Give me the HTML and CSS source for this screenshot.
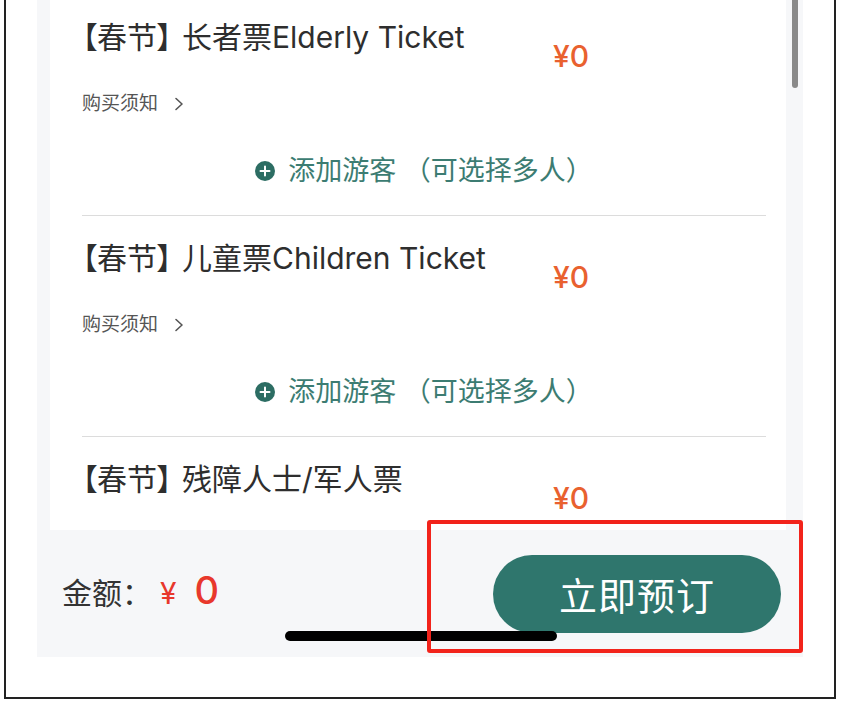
FILE: index.html
```html
<!DOCTYPE html>
<html lang="zh-CN">
<head>
<meta charset="utf-8">
<title>春节门票预订</title>
<link rel="stylesheet" href="styles.css">
</head>
<body>
<div class="frame">
  <div class="phone">
    <div class="card">
      <div class="list">
        <div class="item">
          <div class="head">
            <div class="title"><span class="tag">【春节】</span>长者票Elderly Ticket</div>
            <div class="price">¥0</div>
          </div>
          <div class="note">购买须知<svg class="chev" viewBox="0 0 10 14" width="10" height="14"><path d="M2 1.5 L8 7 L2 12.5" fill="none" stroke="#555" stroke-width="1.6" stroke-linecap="round" stroke-linejoin="round"/></svg></div>
          <div class="add"><svg class="plus" viewBox="0 0 20 20" width="20" height="20"><circle cx="10" cy="10" r="10" fill="#2c6d63"/><path d="M10 5.5 V14.5 M5.5 10 H14.5" stroke="#fff" stroke-width="2" stroke-linecap="round"/></svg><span>添加游客 （可选择多人）</span></div>
        </div>
        <div class="item">
          <div class="head">
            <div class="title"><span class="tag">【春节】</span>儿童票Children Ticket</div>
            <div class="price">¥0</div>
          </div>
          <div class="note">购买须知<svg class="chev" viewBox="0 0 10 14" width="10" height="14"><path d="M2 1.5 L8 7 L2 12.5" fill="none" stroke="#555" stroke-width="1.6" stroke-linecap="round" stroke-linejoin="round"/></svg></div>
          <div class="add"><svg class="plus" viewBox="0 0 20 20" width="20" height="20"><circle cx="10" cy="10" r="10" fill="#2c6d63"/><path d="M10 5.5 V14.5 M5.5 10 H14.5" stroke="#fff" stroke-width="2" stroke-linecap="round"/></svg><span>添加游客 （可选择多人）</span></div>
        </div>
        <div class="item">
          <div class="head">
            <div class="title"><span class="tag">【春节】</span>残障人士/军人票</div>
            <div class="price">¥0</div>
          </div>
        </div>
      </div>
    </div>
    <div class="scrollbar"></div>
    <div class="bar">
      <div class="amount"><span class="label">金额：</span><span class="yen">¥</span><span class="num">0</span></div>
      <button class="book">立即预订</button>
    </div>
    <div class="home"></div>
  </div>
  <div class="mark"></div>
</div>
</body>
</html>
```
FILE: styles.css
```css
html, body {
  margin: 0;
  padding: 0;
  background: #fff;
}
body {
  width: 842px;
  height: 701px;
  overflow: hidden;
  font-family: "Inter", "Noto Sans CJK SC", sans-serif;
}
.frame {
  position: relative;
  margin-left: 4px;
  width: 828px;
  height: 697px;
  border: 2px solid #222;
  border-top: none;
}
.phone {
  position: relative;
  margin-left: 31px;
  width: 766px;
  height: 657px;
  background: #f6f7f9;
  display: flex;
  flex-direction: column;
}
.card {
  margin-left: 13px;
  width: 736px;
  height: 530px;
  background: #fff;
  overflow: hidden;
  box-sizing: border-box;
  padding: 0 20px 0 32px;
}
.list {
  margin-top: -5px;
}
.item {
  height: 220px;
  border-bottom: 1px solid #dcdcdc;
}
.head {
  display: grid;
  grid-template-columns: 1fr 213px;
  padding-top: 22px;
}
.title {
  font-size: 30px;
  line-height: 40px;
  color: #2e2e2e;
  font-feature-settings: "palt";
  white-space: nowrap;
}
.tag {
  margin-right: 10px;
}
.price {
  margin-top: 21px;
  font-size: 30px;
  line-height: 36px;
  color: #e9612f;
  font-weight: 500;
}
.note {
  margin-top: 18px;
  display: flex;
  align-items: center;
  gap: 16px;
  font-size: 19px;
  line-height: 24px;
  color: #555;
}
.add {
  margin-top: 37px;
  display: flex;
  justify-content: center;
  align-items: center;
  gap: 13px;
  font-size: 27px;
  line-height: 36px;
  color: #3c7c72;
}
.plus {
  flex: none;
}
.scrollbar {
  position: absolute;
  left: 755px;
  top: 0;
  width: 6px;
  height: 88px;
  border-radius: 0 0 3px 3px;
  background: #8a8a8a;
}
.bar {
  flex: 1;
  display: flex;
  align-items: center;
  justify-content: space-between;
  padding: 0 22px 0 25px;
}
.amount {
  display: flex;
  align-items: baseline;
  margin-bottom: 7px;
}
.label {
  font-size: 30px;
  color: #333;
}
.yen {
  margin-left: 8px;
  font-size: 30px;
  color: #e8382c;
}
.num {
  margin-left: 18px;
  font-size: 38px;
  font-weight: 500;
  color: #e8382c;
}
.book {
  width: 288px;
  height: 78px;
  border: none;
  border-radius: 39px;
  background: #2f766d;
  color: #fff;
  font-family: "Noto Sans CJK SC", sans-serif;
  font-size: 38px;
  letter-spacing: 1px;
  padding: 0;
}
.home {
  position: absolute;
  left: 248px;
  top: 631px;
  width: 272px;
  height: 10px;
  border-radius: 5px;
  background: #000;
}
.mark {
  position: absolute;
  left: 421px;
  top: 520px;
  width: 368px;
  height: 125px;
  border: 4px solid #f2231b;
  border-radius: 3px;
}
```
